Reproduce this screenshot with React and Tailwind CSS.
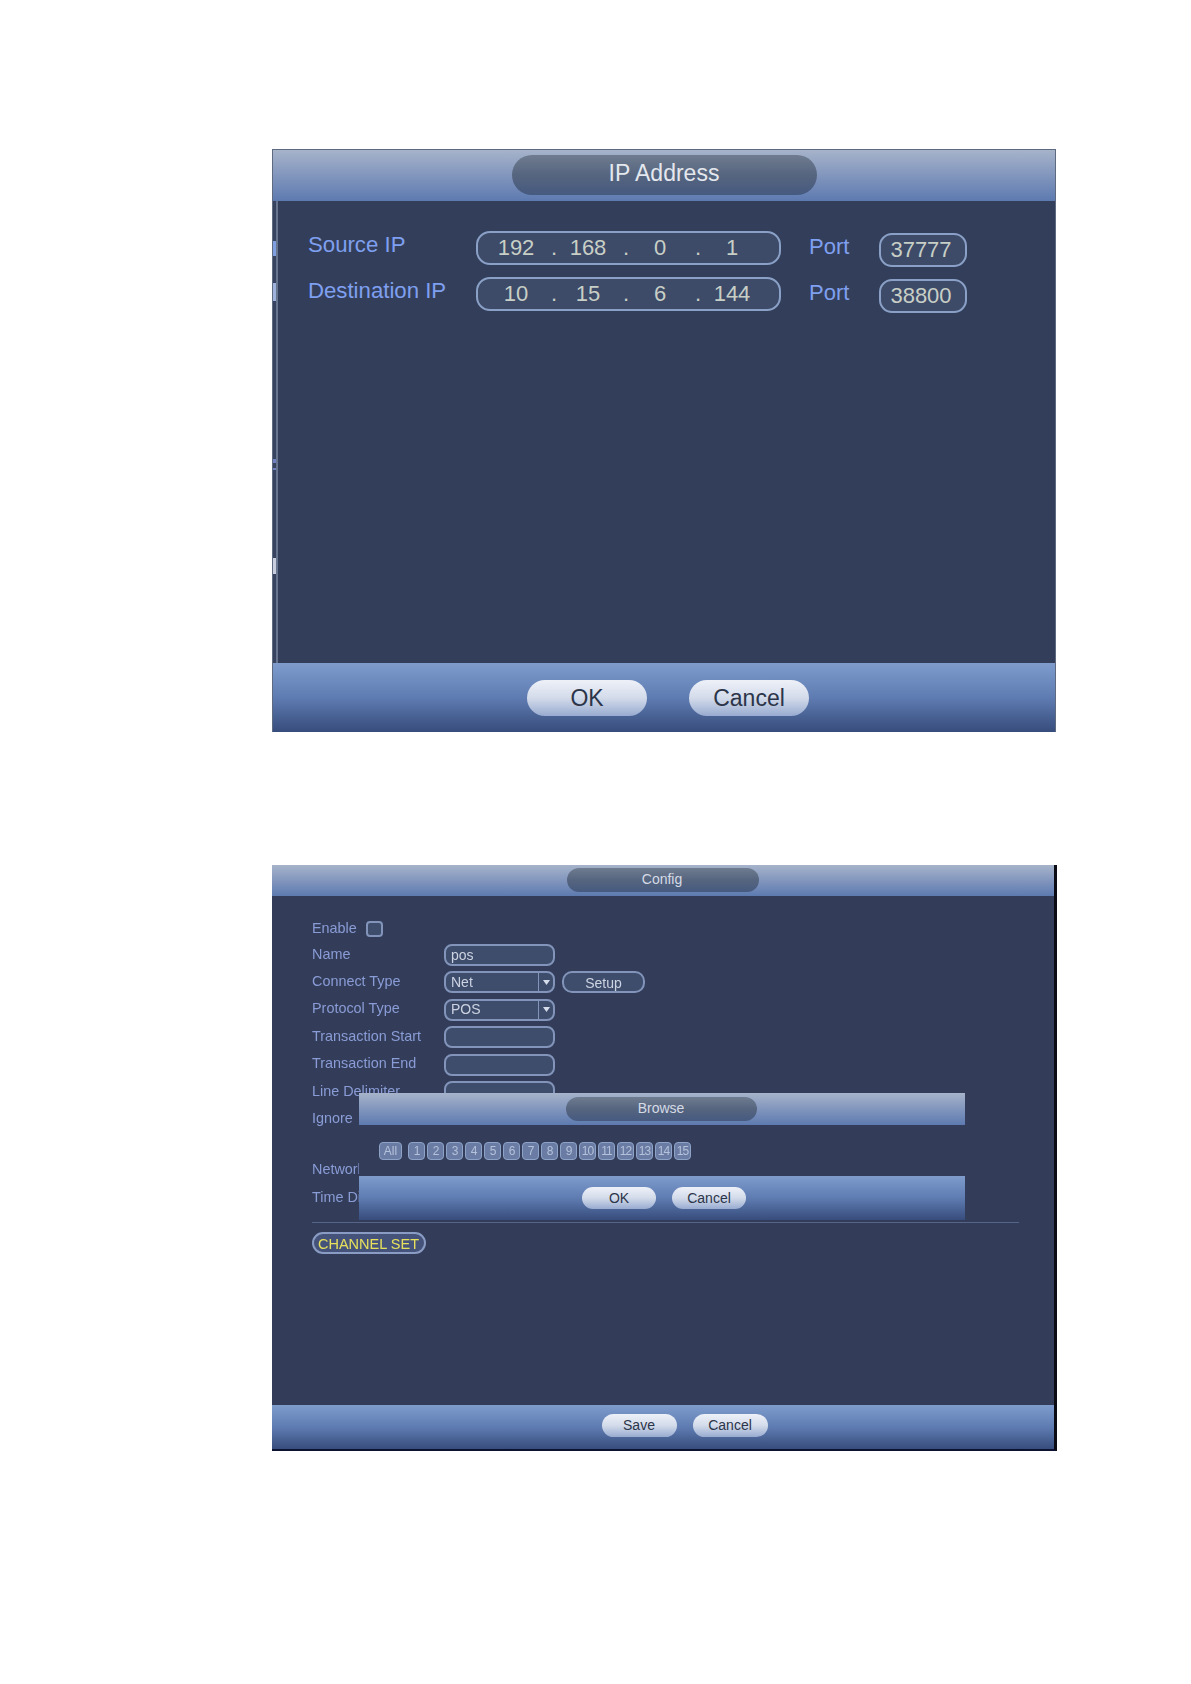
import React from 'react';

const headerBar = 'bg-linear-to-b from-[#a6b3ca] via-[#8296bd] to-[#5d7ab0]';
const footerBar = 'bg-linear-to-b from-[#7f9ccd] via-[#5f7cb2] to-[#374d7c]';
const titlePill = 'bg-linear-to-b from-[#6f7c90] via-[#56657f] to-[#465a80]';
const glossy = 'bg-linear-to-b from-[#eef1f8] via-[#d3dbea] to-[#98abd0] text-[#2c3549]';

const sourceIp = ['192', '168', '0', '1'];
const destIp = ['10', '15', '6', '144'];
const channels = ['1', '2', '3', '4', '5', '6', '7', '8', '9', '10', '11', '12', '13', '14', '15'];

const IpField = ({ parts }) => (
  <div className="flex h-[34px] w-[305px] items-center rounded-[14px] border-2 border-[#8aa0c6] bg-[#3d4b69] pb-[2px] pl-[7px] text-[22px] text-[#c8cfc6]">
    {parts.map((part, idx) => (
      <React.Fragment key={idx}>
        <span className="w-[62px] text-center">{part}</span>
        {idx < 3 && <span className="w-[10px] text-right">.</span>}
      </React.Fragment>
    ))}
  </div>
);

const AddressRow = ({ label, parts, port }) => (
  <div className="flex h-[34px] items-start">
    <span className="mt-[-3px] w-[168px] text-[22.2px] leading-[34px] text-[#7f9ff0]">{label}</span>
    <IpField parts={parts} />
    <span className="ml-[28px] mt-[-1px] w-[70px] text-[22px] leading-[34px] text-[#7f9ff0]">Port</span>
    <div className="mt-[2px] flex h-[34px] w-[88px] items-center justify-center rounded-[13px] border-2 border-[#8aa0c6] bg-[#3d4b69] pb-[2px] pr-[4px] text-[22px] text-[#c8cfc6]">
      {port}
    </div>
  </div>
);

const TextField = ({ value }) => (
  <div className="flex h-[22px] w-[111px] items-center rounded-[8px] border-2 border-[#8294ba] bg-[#3f4d6c] pl-[5px] text-[14px] text-[#ccd3e2]">
    {value}
  </div>
);

const SelectField = ({ value }) => (
  <div className="flex h-[22px] w-[111px] items-center rounded-[8px] border-2 border-[#8294ba] bg-[#3f4d6c] pl-[5px] text-[14px] text-[#ccd3e2]">
    <span className="flex-1">{value}</span>
    <span className="flex h-full w-[15px] items-center justify-center border-l border-[#8294ba]">
      <svg width="7" height="5" viewBox="0 0 7 5">
        <path d="M0 0h7L3.5 5z" fill="#d5dcea" />
      </svg>
    </span>
  </div>
);

const ConfigRow = ({ label, children, className = '' }) => (
  <div className={`flex h-[22px] items-center ${className}`}>
    <span className="w-[132px] whitespace-nowrap pb-[1px] text-[14.4px] text-[#8a9cd6]">{label}</span>
    {children}
  </div>
);

const App = () => {
  return (
    <div className="min-h-[1684px] bg-white pl-[272px] pt-[149px] font-['Liberation_Sans',sans-serif]">
      {/* IP Address dialog */}
      <div className="relative flex h-[583px] w-[784px] flex-col border-t border-l border-r border-[#5d6a80] bg-[#333f5a]">
        <div className={`flex h-[51px] justify-center pt-[5px] ${headerBar}`}>
          <div className={`flex h-[40px] w-[305px] items-center justify-center rounded-[20px] pb-[3px] text-[23px] text-[#e4e8ee] ${titlePill}`}>
            IP Address
          </div>
        </div>
        <div className="flex flex-1 flex-col gap-[12px] border-l-[3px] border-[#38445f] pl-[32px] pt-[30px] shadow-[inset_2px_0_0_#68758f]">
          <AddressRow label="Source IP" parts={sourceIp} port="37777" />
          <AddressRow label="Destination IP" parts={destIp} port="38800" />
        </div>
        <div className={`flex h-[69px] justify-center gap-[42px] pl-[8px] pt-[17px] ${footerBar}`}>
          <button className={`h-[36px] w-[120px] rounded-[18px] text-[23px] ${glossy}`}>OK</button>
          <button className={`h-[36px] w-[120px] rounded-[18px] text-[23px] ${glossy}`}>Cancel</button>
        </div>

        {/* scan marks on the left edge */}
        <span className="absolute left-0 top-[91px] h-[15px] w-[3px] bg-[#7f9fe0]" />
        <span className="absolute left-0 top-[133px] h-[18px] w-[3px] bg-[#9fb2dc]" />
        <span className="absolute left-0 top-[309px] h-[4px] w-[3px] bg-[#6f7fc0]" />
        <span className="absolute left-0 top-[318px] h-[2px] w-[3px] bg-[#6f7fc0]" />
        <span className="absolute left-0 top-[408px] h-[16px] w-[3px] bg-[#c8cedd]" />
      </div>

      {/* Config dialog */}
      <div className="relative mt-[133px] flex h-[586px] w-[785px] flex-col border-r-[3px] border-b-2 border-r-[#0b0b14] border-b-[#0c1230] bg-[#333d5a]">
        <div className={`flex h-[31px] justify-center pt-[3px] ${headerBar}`}>
          <div className={`flex h-[24px] w-[192px] items-center justify-center rounded-[12px] pb-[2px] pr-[2px] text-[14px] text-[#d5dbe6] ${titlePill}`}>
            Config
          </div>
        </div>

        <div className="flex flex-1 flex-col pl-[40px] pr-[35px] pt-[25px] blur-[0.3px]">
          <div className="flex h-[16px] items-center">
            <span className="w-[54px] text-[14.4px] text-[#8a9cd6]">Enable</span>
            <span className="h-[16px] w-[17px] rounded-[4px] border-2 border-[#8294ba] bg-[#3f4d6c]" />
          </div>
          <div className="mt-[7px] flex flex-col gap-[5.4px]">
            <ConfigRow label="Name"><TextField value="pos" /></ConfigRow>
            <ConfigRow label="Connect Type">
              <SelectField value="Net" />
              <button className="ml-[7px] h-[22px] w-[83px] rounded-[10px] border-2 border-[#8294ba] bg-[#3f4d6c] pb-[2px] text-[14px] text-[#ccd3e2]">Setup</button>
            </ConfigRow>
            <ConfigRow label="Protocol Type"><SelectField value="POS" /></ConfigRow>
            <ConfigRow label="Transaction Start"><TextField value="" /></ConfigRow>
            <ConfigRow label="Transaction End"><TextField value="" /></ConfigRow>
            <ConfigRow label="Line Delimiter"><TextField value="" /></ConfigRow>
            <ConfigRow label="Ignore" />
          </div>
          <ConfigRow label="Network" className="mt-[29px]" />
          <ConfigRow label="Time Display" className="mt-[5.5px]" />
          <div className="mt-[13px] h-px bg-[#55658a]" />
          <button className="mt-[9px] h-[22px] w-[114px] whitespace-nowrap rounded-[11px] border-2 border-[#8a9cc4] bg-[#45527a] pb-[2px] pr-[1px] text-[14.5px] text-[#e6e05c]">
            CHANNEL SET
          </button>
        </div>

        <div className={`flex h-[44px] justify-center gap-[16px] pl-[43px] pt-[9px] ${footerBar}`}>
          <button className={`h-[23px] w-[75px] rounded-[12px] text-[14px] ${glossy}`}>Save</button>
          <button className={`h-[23px] w-[75px] rounded-[12px] text-[14px] ${glossy}`}>Cancel</button>
        </div>

        {/* Browse popup */}
        <div className="absolute left-[87px] top-[228px] z-10 flex h-[127px] w-[606px] flex-col bg-[#333d5a]">
          <div className={`flex h-[32px] justify-center pr-[2px] pt-[4px] ${headerBar}`}>
            <div className={`flex h-[24px] w-[191px] items-center justify-center rounded-[12px] pb-[2px] text-[14px] text-[#d5dbe6] ${titlePill}`}>
              Browse
            </div>
          </div>
          <div className="flex h-[51px] items-center pl-[20px] blur-[0.5px]">
            <span className="mr-[6px] flex h-[18px] w-[23px] items-center justify-center rounded-[4px] border border-[#8ea3c8] bg-[#6a7ca3] text-[12px] text-[#b4c1da]">All</span>
            <div className="flex gap-[2px]">
              {channels.map((ch) => (
                <span key={ch} className="flex h-[18px] w-[17px] items-center justify-center rounded-[4px] border border-[#8ea3c8] bg-[#6a7ca3] text-[12px] tracking-[-1px] text-[#b4c1da]">
                  {ch}
                </span>
              ))}
            </div>
          </div>
          <div className={`flex flex-1 justify-center gap-[16px] pl-[4px] pt-[11px] ${footerBar}`}>
            <button className={`h-[22px] w-[74px] rounded-[11px] text-[14px] ${glossy}`}>OK</button>
            <button className={`h-[22px] w-[74px] rounded-[11px] text-[14px] ${glossy}`}>Cancel</button>
          </div>
        </div>
      </div>
    </div>
  );
};

export default App;
